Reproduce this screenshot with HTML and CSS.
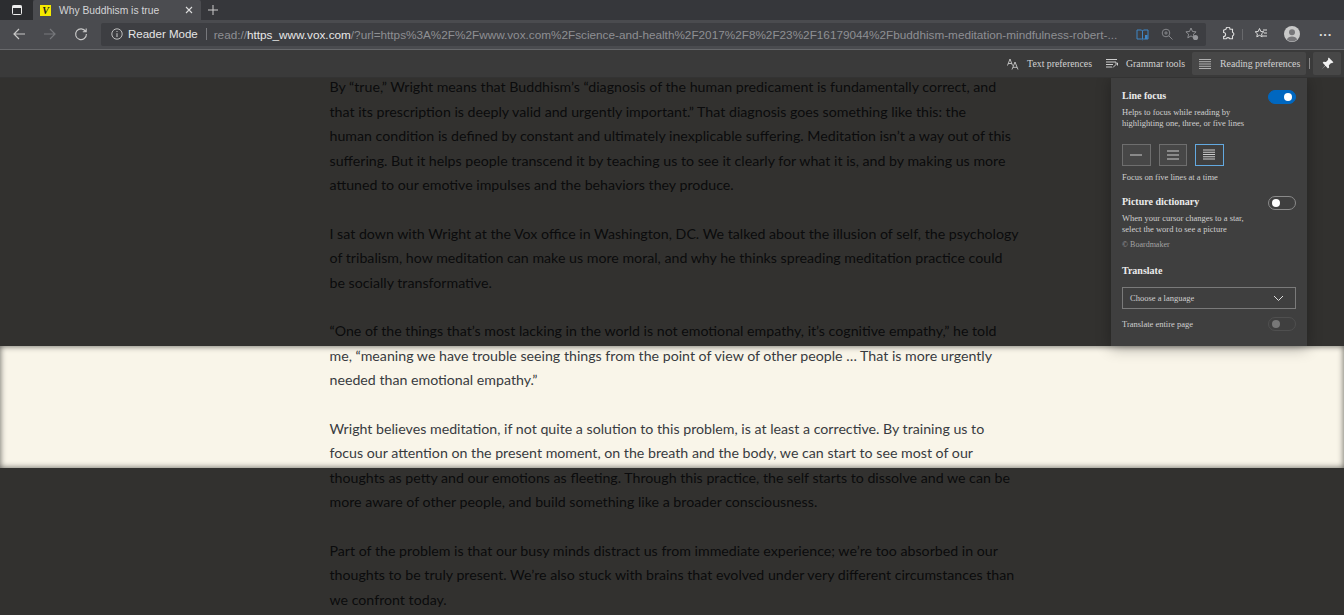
FILE: index.html
```html
<!DOCTYPE html>
<html lang="en">
<head>
  <meta charset="UTF-8" />
  <title>Why Buddhism is true</title>
  <link rel="stylesheet" href="styles.css">
</head>
<body>

  <div class="tab-strip">
    <div class="tab-actions">
      <svg width="12" height="12" viewBox="0 0 12 12"><rect x="1.5" y="1.5" width="9" height="9" rx="1" fill="none" stroke="#eee" stroke-width="1"/><rect x="1.5" y="1.5" width="9" height="2.5" fill="#eee"/></svg>
    </div>
    <div class="tab">
      <span class="favicon">V</span>
      <span class="tab-title">Why Buddhism is true</span>
      <svg class="tab-close" width="8" height="8" viewBox="0 0 8 8"><path d="M1 1l6 6M7 1L1 7" stroke="#ddd" stroke-width="1.1"/></svg>
    </div>
    <svg class="new-tab" width="12" height="12" viewBox="0 0 12 12"><path d="M6 1v10M1 6h10" stroke="#ccc" stroke-width="1"/></svg>
  </div>

  <div class="toolbar">
    <svg class="nav-icon" width="14" height="14" viewBox="0 0 14 14"><path d="M13 7H2M7 2L2 7l5 5" fill="none" stroke="#c8c8c8" stroke-width="1.2"/></svg>
    <svg class="nav-icon" width="14" height="14" viewBox="0 0 14 14"><path d="M1 7h11M7 2l5 5-5 5" fill="none" stroke="#77787c" stroke-width="1.2"/></svg>
    <svg class="nav-icon" width="14" height="14" viewBox="0 0 14 14"><path d="M11.6 4.4A5.4 5.4 0 1 0 12.4 7M12.2 1.4v3.4H8.8" fill="none" stroke="#c8c8c8" stroke-width="1.1"/></svg>
    <div class="address-bar">
      <svg width="12" height="12" viewBox="0 0 12 12"><circle cx="6" cy="6" r="5.2" fill="none" stroke="#ccc" stroke-width="0.9"/><path d="M6 3v1M6 5.2V9" stroke="#ccc" stroke-width="1"/></svg>
      <span class="reader-label">Reader Mode</span>
      <span class="address-sep"></span>
      <span class="url"><span class="url-dim">read://</span><span class="url-host">https_www.vox.com</span><span class="url-dim">/?url=https%3A%2F%2Fwww.vox.com%2Fscience-and-health%2F2017%2F8%2F23%2F16179044%2Fbuddhism-meditation-mindfulness-robert-...</span></span>
      <div class="address-icons">
        <svg width="13" height="13" viewBox="0 0 13 13"><path d="M1 2h4.5l1 1 1-1H12v9H7.5l-1 .8-1-.8H1zM6.5 3v8" fill="none" stroke="#3f86c6" stroke-width="1"/><path d="M9 7h2.5v4H9z" fill="#3f86c6"/></svg>
        <svg width="12" height="12" viewBox="0 0 12 12"><circle cx="5" cy="5" r="3.8" fill="none" stroke="#85868a"/><path d="M8 8l3.5 3.5M3.2 5h3.6M5 3.2v3.6" stroke="#85868a"/></svg>
        <svg width="14" height="14" viewBox="0 0 14 14"><path d="M6 1l1.5 3.5 3.6.3-2.7 2.4.8 3.6L6 8.9l-3.2 1.9.8-3.6L.9 4.8l3.6-.3z" fill="none" stroke="#95969a" stroke-width="0.9"/><circle cx="10.5" cy="10.5" r="2.6" fill="#95969a"/></svg>
      </div>
    </div>
    <div class="toolbar-right">
      <svg width="14" height="14" viewBox="0 0 14 14"><path d="M5 2.2a2 2 0 0 1 4 0h2.5v3a2 2 0 0 1 0 3.8v2.8H8.8a2 2 0 0 0-3.6 0H2.6V9.5a2 2 0 0 0 0-4V3.2z" fill="none" stroke="#ddd" stroke-width="1.1"/></svg>
      <span class="toolbar-sep"></span>
      <svg width="14" height="14" viewBox="0 0 14 14"><path d="M5.5 1.500l1.300 3 3 .3-2.200 2 .6 3-2.700-1.500L2.800 9.800l.6-3-2.200-2 3-.3zM9 3h4M10 6h3M8.500 9H13" fill="none" stroke="#ddd" stroke-width="1"/></svg>
      <svg class="avatar" width="16" height="16" viewBox="0 0 16 16"><circle cx="8" cy="8" r="8" fill="#c9c9c9"/><circle cx="8" cy="6.300" r="3" fill="#77777a"/><path d="M2.800 13.500a5.500 4.500 0 0 1 10.400 0A8 8 0 0 1 2.800 13.500z" fill="#77777a"/></svg>
      <span class="more">···</span>
    </div>
  </div>

  <div class="reader-bar">
    <div class="reader-tool">
      <svg width="12" height="12" viewBox="0 0 12 12"><path d="M.5 7.500L3 1l2.500 6.500M1.300 5.500h3.400M5 11.500L8 4l3 7.500M6 9.300h4" fill="none" stroke="#ddd" stroke-width="0.8"/></svg>
      <span>Text preferences</span>
    </div>
    <div class="reader-tool">
      <svg width="12" height="11" viewBox="0 0 12 11"><path d="M0 1.500h11M0 4h10M0 6.500h7M0 9h6M7 9.500L11 5.500M9 5h2.500v2.500" fill="none" stroke="#ddd" stroke-width="0.9"/></svg>
      <span>Grammar tools</span>
    </div>
    <div class="reader-tool reader-tool-active">
      <svg width="12" height="10" viewBox="0 0 12 10"><path d="M0 .5h12M0 2.700h12M0 5h12M0 7.300h12M0 9.500h12" stroke="#bbb" stroke-width="0.9"/></svg>
      <span>Reading preferences</span>
    </div>
    <span class="reader-sep"></span>
    <div class="pin-btn">
      <svg width="14" height="14" viewBox="0 0 12 12"><path d="M7.500.5l4 4-1.300.8-.7-.2L7.600 7l.2 2-1 .8-2.300-2.500L1 11l3.700-3.500L2.300 5l.8-1 2 .2 1.900-1.900-.2-.7z" fill="#f2f2f2"/></svg>
    </div>
  </div>

  <div class="reader-page">
    <div class="article">
      <p>By “true,” Wright means that Buddhism’s “diagnosis of the human predicament is fundamentally correct, and<br>that its prescription is deeply valid and urgently important.” That diagnosis goes something like this: the<br>human condition is defined by constant and ultimately inexplicable suffering. Meditation isn’t a way out of this<br>suffering. But it helps people transcend it by teaching us to see it clearly for what it is, and by making us more<br>attuned to our emotive impulses and the behaviors they produce.</p>
      <p>I sat down with Wright at the Vox office in Washington, DC. We talked about the illusion of self, the psychology<br>of tribalism, how meditation can make us more moral, and why he thinks spreading meditation practice could<br>be socially transformative.</p>
      <p>“One of the things that’s most lacking in the world is not emotional empathy, it’s cognitive empathy,” he told<br>me, “meaning we have trouble seeing things from the point of view of other people … That is more urgently<br>needed than emotional empathy.”</p>
      <p>Wright believes meditation, if not quite a solution to this problem, is at least a corrective. By training us to<br>focus our attention on the present moment, on the breath and the body, we can start to see most of our<br>thoughts as petty and our emotions as fleeting. Through this practice, the self starts to dissolve and we can be<br>more aware of other people, and build something like a broader consciousness.</p>
      <p>Part of the problem is that our busy minds distract us from immediate experience; we’re too absorbed in our<br>thoughts to be truly present. We’re also stuck with brains that evolved under very different circumstances than<br>we confront today.</p>
    </div>

    <div class="mask mask-top"></div>
    <div class="mask mask-bottom"></div>
    <div class="focus-edge"></div>

    <div class="prefs-panel">
      <div class="prefs-row">
        <h3>Line focus</h3>
        <span class="toggle toggle-on"></span>
      </div>
      <p class="prefs-note">Helps to focus while reading by<br>highlighting one, three, or five lines</p>
      <div class="line-buttons">
        <button class="line-btn"><svg width="16" height="10" viewBox="0 0 16 10"><path d="M2 5h12" stroke="#ccc"/></svg></button>
        <button class="line-btn"><svg width="16" height="10" viewBox="0 0 16 10"><path d="M2 1h12M2 5h12M2 9h12" stroke="#ccc"/></svg></button>
        <button class="line-btn line-btn-active"><svg width="14" height="11" viewBox="0 0 14 11"><path d="M1 1h12M1 3.250h12M1 5.500h12M1 7.750h12M1 10h12" stroke="#ddd" stroke-width="0.9"/></svg></button>
      </div>
      <p class="prefs-note prefs-status">Focus on five lines at a time</p>

      <div class="prefs-row prefs-section">
        <h3>Picture dictionary</h3>
        <span class="toggle"></span>
      </div>
      <p class="prefs-note">When your cursor changes to a star,<br>select the word to see a picture</p>
      <p class="prefs-credit">© Boardmaker</p>

      <h3 class="translate-title">Translate</h3>
      <div class="language-select">
        <span>Choose a language</span>
        <svg width="11" height="7" viewBox="0 0 11 7"><path d="M1 1l4.500 4.500L10 1" fill="none" stroke="#ddd" stroke-width="1"/></svg>
      </div>
      <div class="prefs-row translate-page">
        <span>Translate entire page</span>
        <span class="toggle toggle-disabled"></span>
      </div>
    </div>
  </div>

</body>
</html>
```

FILE: styles.css
```css
* {
  box-sizing: border-box;
}

html, body {
  height: 100%;
}

body {
  margin: 0;
  display: flex;
  flex-direction: column;
  overflow: hidden;
  font-family: "Liberation Sans", Arial, sans-serif;
  background: #32312e;
}

svg {
  flex: none;
}

/* browser chrome */
.tab-strip {
  height: 20px;
  display: flex;
  align-items: center;
  background: #36373b;
  flex: none;
}

.tab-actions {
  width: 33px;
  height: 20px;
  display: flex;
  align-items: center;
  justify-content: center;
  background: #2c2d30;
}

.tab {
  width: 168px;
  height: 20px;
  display: flex;
  align-items: center;
  padding: 0 8px 0 7px;
  background: #4b4c50;
  border-radius: 2px 2px 0 0;
}

.favicon {
  width: 11px;
  height: 11px;
  background: #f5ea00;
  color: #222;
  font: italic bold 10px/11px "Liberation Serif", serif;
  text-align: center;
}

.tab-title {
  flex: 1;
  margin-left: 8px;
  font-size: 10.3px;
  color: #d4d4d6;
}

.new-tab {
  margin-left: 6px;
}

.toolbar {
  height: 30px;
  display: flex;
  align-items: center;
  padding: 0 0 1px 12px;
  background: #4a4b4f;
  border-bottom: 1px solid #68696c;
  flex: none;
}

.nav-icon {
  margin-right: 17px;
}

.nav-icon:nth-of-type(3) {
  margin-right: 13px;
}

.address-bar {
  width: 1105px;
  height: 23px;
  display: flex;
  align-items: center;
  padding: 0 7px 0 10px;
  background: #3d3e42;
  border-radius: 2px;
  font-size: 11.5px;
  white-space: nowrap;
}

.reader-label {
  margin-left: 5px;
  color: #e6e6e6;
}

.address-sep {
  width: 1px;
  height: 12px;
  margin: 0 7px 0 8px;
  background: #77787c;
}

.url {
  flex: 1;
  min-width: 0;
  font-size: 11.75px;
}

.url-dim {
  color: #8e8f93;
}

.url-host {
  color: #e8e8e8;
}

.address-icons {
  display: flex;
  align-items: center;
  gap: 12px;
}

.toolbar-right {
  flex: 1;
  display: flex;
  align-items: center;
  padding-left: 15px;
}

.toolbar-sep {
  width: 1px;
  height: 11px;
  margin: 0 11px 0 7px;
  background: #68696c;
}

.avatar {
  margin-left: 16px;
}

.more {
  margin-left: 19px;
  color: #ddd;
  font-size: 13px;
  font-weight: bold;
}

/* reader toolbar */
.reader-bar {
  height: 28px;
  display: flex;
  align-items: center;
  justify-content: flex-end;
  padding-right: 3px;
  background: #3a3a3a;
  border-bottom: 1px solid #333;
  font-family: "Liberation Serif", serif;
  font-size: 9.8px;
  white-space: nowrap;
  color: #d2d2d2;
  flex: none;
}

.reader-tool {
  height: 23px;
  display: flex;
  align-items: center;
  gap: 8px;
  padding: 0 7px;
}

.reader-tool-active {
  width: 114px;
  gap: 9px;
  padding: 0 6px 0 7px;
  background: #474747;
  border-radius: 2px;
}

.reader-sep {
  width: 1px;
  height: 11px;
  margin: 0 3px;
  background: #888;
}

.pin-btn {
  width: 28px;
  height: 23px;
  display: flex;
  align-items: center;
  justify-content: center;
  background: #474747;
  border-radius: 2px;
}

/* article */
.reader-page {
  flex: 1;
  position: relative;
  overflow: hidden;
  background: #f9f5e9;
}

.article {
  width: 700px;
  margin: -2.6px 0 0 329.5px;
  font-family: Lato, sans-serif;
  font-size: 14.2px;
  line-height: 24.4px;
  white-space: nowrap;
  color: #383b40;
}

.article p {
  margin: 0 0 24.4px;
}

.mask {
  position: absolute;
  left: 0;
  right: 0;
  background: rgba(0, 0, 0, 0.8);
}

.mask-top {
  top: 0;
  height: 268px;
}

.mask-bottom {
  top: 390px;
  bottom: 0;
}

/* soft inner edge of the focused band */
.focus-edge {
  position: absolute;
  top: 268px;
  left: 0;
  right: 0;
  height: 122px;
  box-shadow: inset 0 0 6px rgba(0, 0, 0, 0.65);
}

/* reading preferences flyout */
.prefs-panel {
  position: absolute;
  top: 0;
  left: 1111px;
  width: 196px;
  height: 268px;
  padding: 12px 11px 0;
  background: #3f3f3f;
  box-shadow: 0 2px 14px rgba(0, 0, 0, 0.3);
  font-family: "Liberation Serif", serif;
  color: #cfcfcf;
}

.prefs-panel h3 {
  margin: 0;
  font-size: 10px;
  line-height: 12px;
  font-weight: bold;
  color: #ececec;
}

.prefs-row {
  display: flex;
  align-items: center;
  justify-content: space-between;
}

.prefs-panel .prefs-row h3 {
  margin-bottom: 2px;
}

.prefs-note {
  margin: 3px 0 0;
  font-size: 8.5px;
  line-height: 11.3px;
}

.toggle {
  width: 28px;
  height: 14px;
  position: relative;
  border: 1px solid #8a8a8a;
  border-radius: 7px;
}

.toggle::after {
  content: "";
  position: absolute;
  top: 2px;
  left: 3px;
  width: 8px;
  height: 8px;
  border-radius: 50%;
  background: #fff;
}

.toggle-on {
  background: #0067c0;
  border-color: #0067c0;
}

.toggle-on::after {
  left: auto;
  right: 3px;
}

.toggle-disabled {
  border-color: #4f4f4f;
}

.toggle-disabled::after {
  background: #777;
}

.line-buttons {
  display: flex;
  gap: 8px;
  margin-top: 14px;
}

.line-btn {
  width: 28.5px;
  height: 22px;
  padding: 0;
  display: flex;
  align-items: center;
  justify-content: center;
  background: #474747;
  border: 1px solid #6e6e6e;
}

.line-btn-active {
  background: #3f3f3f;
  border-color: #63a9e0;
}

.prefs-status {
  margin-top: 6px;
}

.prefs-section {
  margin-top: 13px;
}

.prefs-section + .prefs-note {
  margin-top: 3px;
}

.prefs-credit {
  margin: 5px 0 0;
  font-size: 8px;
  line-height: 9px;
  color: #a3a3a3;
}

.prefs-panel .translate-title {
  margin-top: 16px;
}

.language-select {
  height: 22px;
  margin-top: 10px;
  display: flex;
  align-items: center;
  justify-content: space-between;
  padding: 0 11px 0 7px;
  border: 1px solid #7a7a7a;
  font-size: 8.5px;
}

.translate-page {
  margin-top: 8px;
  font-size: 8.5px;
}
```
